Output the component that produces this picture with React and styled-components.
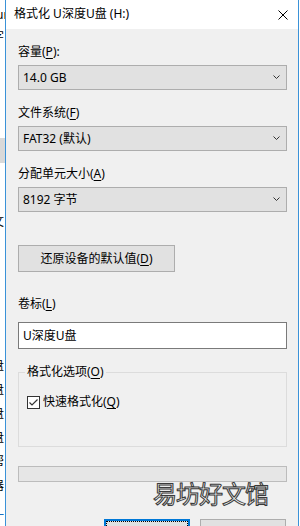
import React from 'react';
import styled, { createGlobalStyle } from 'styled-components';

const GlobalStyle = createGlobalStyle`
    html, body {
        margin: 0;
        padding: 0;
        background: #fff;
    }
    body {
        font-family: "Noto Sans", "Noto Sans CJK SC", sans-serif;
    }
`;

const Page = styled.div`
    position: relative;
    display: flex;
    width: 300px;
    height: 526px;
    overflow: hidden;
    background: #fff;
    font-family: "Noto Sans", "Noto Sans CJK SC", sans-serif;
    font-size: 12px;
    color: #000;
`;

// the explorer window peeking out behind the dialog
const BackWindow = styled.div`
    display: flex;
    flex-direction: column;
    width: 5px;
    flex-shrink: 0;
    overflow: hidden;
    background: #fff;
    & > * { flex-shrink: 0; }
`;

const BackText = styled.div`
    margin-top: ${p => p.$top || 0}px;
    margin-left: ${p => p.$shift || -8}px;
    height: 16px;
    line-height: 16px;
    white-space: nowrap;
    color: ${p => p.$color || '#000'};
`;

const BackBand = styled.div`
    margin-top: ${p => p.$top || 0}px;
    height: 25px;
    background: #d9d9d9;
`;

const Dialog = styled.div`
    display: flex;
    flex-direction: column;
    width: 292px;
    flex-shrink: 0;
    border-left: 1px solid #3a92d8;
    border-right: 1px solid #3a92d8;
    background: #f0f0f0;
`;

const RightEdge = styled.div`
    width: 1px;
    flex-shrink: 0;
    background: #fff;
`;

const TitleBar = styled.div`
    display: flex;
    align-items: center;
    justify-content: space-between;
    flex-shrink: 0;
    height: 29px;
    box-sizing: border-box;
    padding: 0 10px 2px 8px;
    background: #fff;
`;

const Title = styled.span`
    line-height: 16px;
`;

const Close = styled.div`
    display: flex;
    width: 10px;
    height: 10px;
    margin-top: 2px;
`;

const Body = styled.div`
    display: flex;
    flex-direction: column;
    flex-shrink: 0;
    padding: 15px 11px 0 12px;
    & > * { flex-shrink: 0; }
`;

const Field = styled.div`
    display: flex;
    flex-direction: column;
    gap: ${p => p.$gap || 5}px;
    margin-top: ${p => p.$top || 0}px;
`;

const Label = styled.div`
    height: 16px;
    line-height: 16px;
`;

const Key = styled.span`
    text-decoration: underline;
    text-underline-offset: 2px;
`;

const Combo = styled.div`
    display: flex;
    align-items: center;
    justify-content: space-between;
    height: 25px;
    box-sizing: border-box;
    padding: 0 6px 0 4px;
    background: #e1e1e1;
    border: 1px solid #adadad;
    line-height: 16px;
`;

const Chevron = styled.svg`
    width: 7px;
    height: 5px;
`;

const Button = styled.div`
    position: relative;
    display: flex;
    align-items: center;
    justify-content: center;
    width: ${p => p.$width || 86}px;
    height: 27px;
    box-sizing: border-box;
    margin-top: ${p => p.$top || 0}px;
    background: #e1e1e1;
    border: 1px solid ${p => p.$default ? '#0078d7' : '#adadad'};
    box-shadow: ${p => p.$default ? 'inset 0 0 0 1px #0078d7' : 'none'};
    line-height: 16px;
    &::after {
        content: '';
        display: ${p => p.$default ? 'block' : 'none'};
        position: absolute;
        inset: 1px;
        border: 1px dotted #000;
    }
`;

const TextInput = styled.div`
    display: flex;
    align-items: center;
    height: 27px;
    box-sizing: border-box;
    padding-left: 4px;
    background: #fff;
    border: 1px solid #7a7a7a;
    line-height: 16px;
`;

const Group = styled.fieldset`
    margin: 15px 0 0;
    padding: 14px 0 0 6px;
    height: 83px;
    box-sizing: border-box;
    min-inline-size: 0;
    border: 1px solid #dcdcdc;
`;

const Legend = styled.legend`
    padding: 0 2px;
    line-height: 16px;
`;

const CheckRow = styled.div`
    display: flex;
    align-items: center;
    gap: 3px;
    margin-left: 2px;
    height: 16px;
    line-height: 16px;
`;

const CheckBox = styled.div`
    display: flex;
    width: 13px;
    height: 13px;
    box-sizing: border-box;
    background: #fff;
    border: 1px solid #333;
`;

const Progress = styled.div`
    margin-top: 19px;
    height: 16px;
    box-sizing: border-box;
    background: #e6e6e6;
    border: 1px solid #bcbcbc;
`;

const ButtonRow = styled.div`
    display: flex;
    justify-content: flex-end;
    gap: 10px;
    margin-top: 37px;
    padding-right: 1px;
`;

const Watermark = styled.div`
    position: absolute;
    left: 153px;
    top: 479px;
    font-family: "Noto Sans CJK SC", sans-serif;
    font-size: 24px;
    line-height: 28px;
    letter-spacing: -1px;
    color: #f4f4f4;
    -webkit-text-stroke: 1px #3a3a3a;
    text-shadow: 0 0 1px #8a8a8a;
`;

const ComboField = ({ top, label, value }) => (
    <Field $top={top}>
        <Label>{label}</Label>
        <Combo>
            <span>{value}</span>
            <Chevron viewBox="0 0 7 5">
                <polyline points="0.5,0.5 3.5,3.5 6.5,0.5" fill="none" stroke="#333" strokeWidth="1" />
            </Chevron>
        </Combo>
    </Field>
);

const App = () => {
    return (
        <Page>
            <GlobalStyle />
            <BackWindow>
                <BackText $top={7} $shift={-4}>ur</BackText>
                <BackText $top={6}>字</BackText>
                <BackBand $top={93} />
                <BackText $top={51}>文</BackText>
                <BackText $top={128}>盘</BackText>
                <BackText $top={8}>盘</BackText>
                <BackText $top={8}>盘</BackText>
                <BackText $top={8}>盘</BackText>
                <BackText $top={8}>帮</BackText>
                <BackText $top={8}>器</BackText>
                <BackText $top={12} $color="#1a6fc0">—</BackText>
            </BackWindow>
            <Dialog>
                <TitleBar>
                    <Title>格式化 U深度U盘 (H:)</Title>
                    <Close>
                        <svg width="10" height="10" viewBox="0 0 10 10">
                            <path d="M0.5 0.5 L9.5 9.5 M9.5 0.5 L0.5 9.5" stroke="#000" strokeWidth="1" />
                        </svg>
                    </Close>
                </TitleBar>
                <Body>
                    <ComboField label={<>容量(<Key>P</Key>):</>} value="14.0 GB" />
                    <ComboField top={15} label={<>文件系统(<Key>F</Key>)</>} value="FAT32 (默认)" />
                    <ComboField top={15} label={<>分配单元大小(<Key>A</Key>)</>} value="8192 字节" />

                    <Button $width={157} $top={33}>还原设备的默认值(<Key>D</Key>)</Button>

                    <Field $top={24} $gap={10}>
                        <Label>卷标(<Key>L</Key>)</Label>
                        <TextInput>U深度U盘</TextInput>
                    </Field>

                    <Group>
                        <Legend>格式化选项(<Key>O</Key>)</Legend>
                        <CheckRow>
                            <CheckBox>
                                <svg width="11" height="11" viewBox="0 0 11 11">
                                    <polyline points="1.5,5.5 4,8 9.5,2.5" fill="none" stroke="#333" strokeWidth="1.2" />
                                </svg>
                            </CheckBox>
                            <span>快速格式化(<Key>Q</Key>)</span>
                        </CheckRow>
                    </Group>

                    <Progress />

                    <ButtonRow>
                        <Button $default />
                        <Button />
                    </ButtonRow>
                </Body>
            </Dialog>
            <RightEdge />
            <Watermark>易坊好文馆</Watermark>
        </Page>
    );
};

export default App;
